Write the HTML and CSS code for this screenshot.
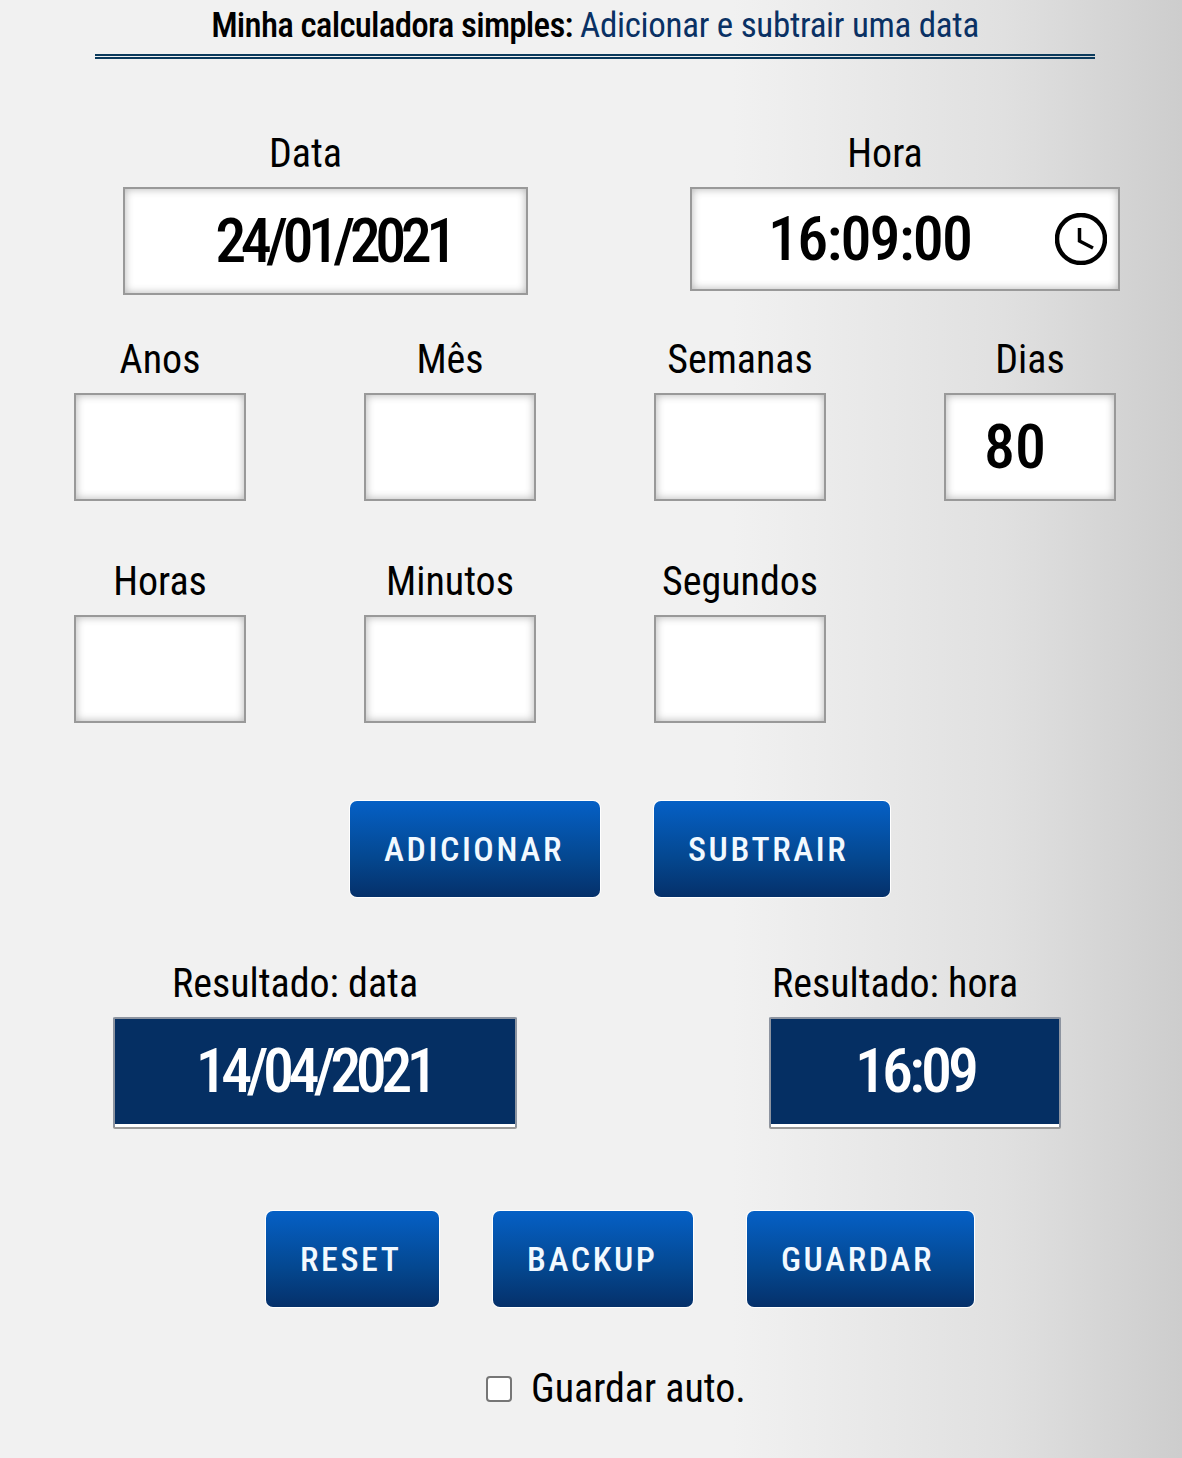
FILE: index.html
```html
<!DOCTYPE html>
<html lang="pt">
<head>
<meta charset="utf-8">
<title>Adicionar e subtrair uma data</title>
<link rel="stylesheet" href="styles.css">
</head>
<body>
<main class="page">
  <h1 class="title"><span>Minha calculadora simples: <em>Adicionar e subtrair uma data</em></span></h1>
  <section class="row row-top">
    <div class="field field-date">
      <label class="label">Data</label>
      <div class="box box-date"><span class="big tight">24/01/2021</span></div>
    </div>
    <div class="field field-time">
      <label class="label">Hora</label>
      <div class="box box-time">
        <span class="big clock-text">16:09:00</span>
        <svg class="clock" viewBox="0 0 52 52" aria-hidden="true"><circle cx="26" cy="26" r="24" fill="none" stroke="#000" stroke-width="4.5"/><path d="M24.5 15V28L38 35" fill="none" stroke="#000" stroke-width="3.5"/></svg>
      </div>
    </div>
  </section>
  <section class="grid grid-one">
    <div class="cell"><label class="label">Anos</label><div class="box small"></div></div>
    <div class="cell"><label class="label">Mês</label><div class="box small"></div></div>
    <div class="cell"><label class="label">Semanas</label><div class="box small"></div></div>
    <div class="cell"><label class="label">Dias</label><div class="box small"><span class="big">80</span></div></div>
  </section>
  <section class="grid grid-two">
    <div class="cell"><label class="label">Horas</label><div class="box small"></div></div>
    <div class="cell"><label class="label">Minutos</label><div class="box small"></div></div>
    <div class="cell"><label class="label">Segundos</label><div class="box small"></div></div>
  </section>
  <section class="actions actions-one">
    <button class="btn w-add">ADICIONAR</button>
    <button class="btn w-sub">SUBTRAIR</button>
  </section>
  <section class="row row-result">
    <div class="field result-date">
      <label class="label">Resultado: data</label>
      <div class="result"><span class="big tight shifted">14/04/2021</span></div>
    </div>
    <div class="field result-time">
      <label class="label">Resultado: hora</label>
      <div class="result"><span class="big snug">16:09</span></div>
    </div>
  </section>
  <section class="actions actions-two">
    <button class="btn w-reset">RESET</button>
    <button class="btn w-backup">BACKUP</button>
    <button class="btn w-save">GUARDAR</button>
  </section>
  <div class="auto"><span class="check"></span><span class="auto-text">Guardar auto.</span></div>
</main>
</body>
</html>
```
FILE: styles.css
```css
* { box-sizing: border-box; }
html, body { margin: 0; padding: 0; }
body {
  width: 1182px;
  height: 1458px;
  overflow: hidden;
  background: linear-gradient(90deg, #f1f1f1 0, #f1f1f1 62%, #e0e0e0 85%, #cdcdcd 100%);
  color: #000;
  font-family: Roboto, "Liberation Sans", sans-serif;
  font-stretch: 75%;
}
.page { display: flex; flex-direction: column; height: 100%; }
.title {
  margin: 0 87px 0 95px;
  height: 59px;
  padding-top: 6px;
  border-bottom: 5px double #0b3a5c;
  text-align: center;
  font-size: 35px;
  line-height: 40px;
  font-weight: 500;
  letter-spacing: -0.75px;
  white-space: nowrap;
}
.title em { font-style: normal; font-weight: 400; letter-spacing: -0.3px; color: #0a3164; }
.label { display: block; font-size: 40px; line-height: 46px; text-align: center; white-space: nowrap; }
.row { display: flex; }
.row-top { margin-top: 72px; padding-left: 123px; gap: 162px; align-items: flex-start; }
.field-date { width: 405px; }
.field-time { width: 430px; }
.field .label { padding-right: 40px; margin-bottom: 10px; }
.box {
  display: flex;
  align-items: center;
  background: #fff;
  border: 2px solid #999;
  box-shadow: inset 0 0 8px rgba(0, 0, 0, 0.3);
}
.box-date { height: 108px; justify-content: center; padding-left: 16px; }
.box-time { height: 104px; padding-left: 76px; position: relative; }
.big { font-size: 62px; line-height: 70px; font-weight: 500; }
.tight { letter-spacing: -5.5px; }
.snug { letter-spacing: -4px; }
.shifted { margin-right: 2px; }
.clock-text { letter-spacing: -1.8px; }
.clock { position: absolute; right: 11px; top: 24px; width: 52px; height: 52px; }
.grid { display: grid; grid-template-columns: repeat(4, 172px); column-gap: 118px; padding-left: 74px; }
.grid-one { margin-top: 42px; }
.grid-two { margin-top: 58px; }
.cell .label { margin-bottom: 10px; }
.small { height: 108px; padding-left: 38px; }
.actions { display: flex; }
.actions-one { margin-top: 78px; padding-left: 350px; gap: 54px; }
.btn {
  height: 96px;
  padding: 0 0 0 34px;
  border: 0;
  border-radius: 7px;
  background: linear-gradient(180deg, #0560c6 0, #04478f 60%, #05306a 100%);
  box-shadow: 0 0 0 1px #fff;
  color: #f2f9ff;
  font-family: inherit;
  font-stretch: 75%;
  font-size: 34px;
  font-weight: 500;
  letter-spacing: 2.6px;
  text-align: left;
}
.w-add { width: 250px; }
.w-sub { width: 236px; }
.w-reset { width: 173px; }
.w-backup { width: 200px; }
.w-save { width: 227px; }
.row-result { margin-top: 64px; padding-left: 113px; gap: 252px; }
.result-date { width: 404px; }
.result-time { width: 292px; }
.result {
  display: flex;
  align-items: center;
  justify-content: center;
  height: 110px;
  padding-bottom: 4px;
  background: #052f63;
  color: #fff;
  border: 2px solid #8d94a0;
  border-bottom: 0;
  border-radius: 2px;
  box-shadow: inset 0 -3px 0 #fff, 0 1px 0 #999, 0 2px 0 #999;
}
.actions-two { margin-top: 84px; padding-left: 266px; gap: 54px; }
.auto { display: flex; align-items: center; gap: 19px; margin-top: 59px; padding-left: 486px; }
.check { width: 26px; height: 26px; background: #fff; border: 2px solid #767676; border-radius: 4px; }
.auto-text { font-size: 40px; line-height: 46px; }
```
